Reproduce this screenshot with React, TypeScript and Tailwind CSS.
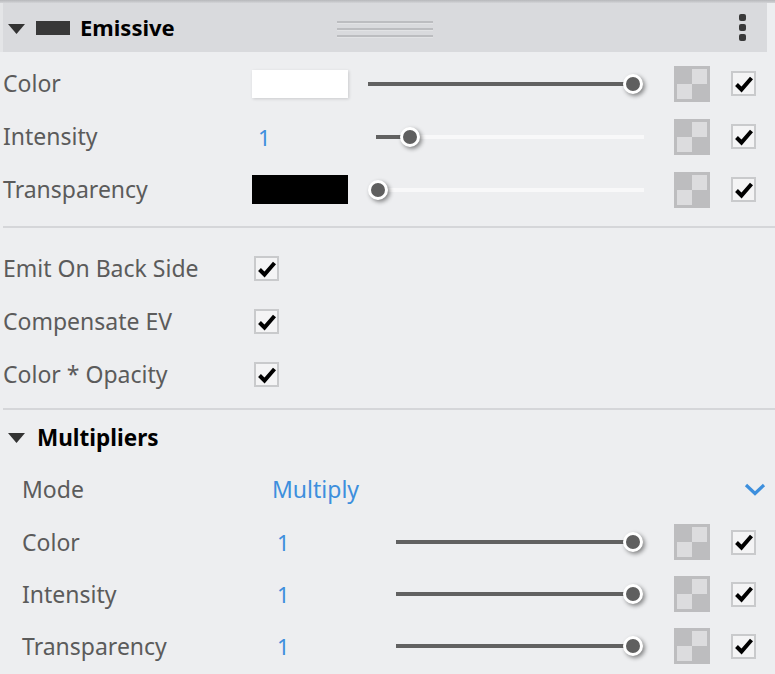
import React from "react";

const font = { fontFamily: '"Noto Sans", "Open Sans", sans-serif' };

const Check = () => (
  <div className="w-[25px] h-[25px] border-2 border-[#c9cacc] bg-[#f4f4f5] flex items-center justify-center">
    <svg width="20" height="18" viewBox="0 0 20 18">
      <path d="M2.5 9.5 L7.5 14.5 L17.5 3" fill="none" stroke="#000" strokeWidth="4" strokeLinejoin="miter" />
    </svg>
  </div>
);

const Checker = () => (
  <div className="w-[36px] h-[36px] bg-[#bdbdbf] p-[3px] grid grid-cols-2 grid-rows-2">
    <div />
    <div className="bg-[#dcdcde]" />
    <div className="bg-[#dcdcde]" />
    <div />
  </div>
);

// thumb position in px from container's left edge
const Slider = ({ width, start, thumb }: { width: number; start: number; thumb: number }) => (
  <div className="relative h-[20px]" style={{ width }}>
    <div className="absolute top-[8px] h-[4px] bg-[#f8f8f9]" style={{ left: thumb, right: 0 }} />
    {thumb > start && (
      <div className="absolute top-[8px] h-[4px] bg-[#616161]" style={{ left: start, width: thumb - start }} />
    )}
    <div
      className="absolute top-0 w-[20px] h-[20px] rounded-full bg-[#5f5f5f] border-[3px] border-white shadow-[2px_2px_4px_rgba(0,0,0,0.45)]"
      style={{ left: thumb - 10 }}
    />
  </div>
);

const Label = ({ children, w }: { children: React.ReactNode; w: string }) => (
  <div className={`${w} text-[23px] text-[#5b5b5b] leading-none`}>{children}</div>
);

const Triangle = () => (
  <svg width="17" height="10" viewBox="0 0 17 10">
    <path d="M0 0 H17 L8.5 10 Z" fill="#333" />
  </svg>
);

export default function App() {
  return (
    <div className="w-[775px] h-[674px] bg-[#edeef0] overflow-hidden" style={font}>
      <div className="h-[3px] bg-gradient-to-b from-[#b7b8bb] to-[#d3d4d7]" />
      <div className="flex">
        <div className="w-[3px] bg-[#e4e5e7]" />
        <div className="w-[764px] h-[49px] bg-[#d9dadd] flex items-center relative">
          <div className="ml-[5px] mt-[2px]"><Triangle /></div>
          <div className="ml-[11px] w-[34px] h-[14px] bg-[#383838] mt-[1px]" />
          <div className="ml-[10px] text-[22px] font-bold text-black leading-none mb-[2px]">Emissive</div>
          <div className="absolute left-[334px] top-[18px] w-[96px] flex flex-col gap-[4px]">
            <div className="h-[2px] bg-[#bcbdc0] border-b border-[#e2e3e5] box-content" />
            <div className="h-[2px] bg-[#bcbdc0] border-b border-[#e2e3e5] box-content" />
            <div className="h-[2px] bg-[#bcbdc0] border-b border-[#e2e3e5] box-content" />
          </div>
          <div className="ml-auto mr-[21px] flex flex-col gap-[3px]">
            <div className="w-[7px] h-[7px] rounded-[2px] bg-[#3a3a3a]" />
            <div className="w-[7px] h-[7px] rounded-[2px] bg-[#3a3a3a]" />
            <div className="w-[7px] h-[7px] rounded-[2px] bg-[#3a3a3a]" />
          </div>
        </div>
      </div>

      <div className="pt-[5px] pl-[3px]">
        <div className="h-[53px] flex items-center">
          <Label w="w-[249px]">Color</Label>
          <div className="w-[96px] h-[28px] bg-white shadow-[1px_1px_3px_rgba(0,0,0,0.15)]" />
          <div className="ml-[20px]"><Slider width={276} start={0} thumb={265} /></div>
          <div className="ml-[30px]"><Checker /></div>
          <div className="ml-[21px]"><Check /></div>
        </div>
        <div className="h-[53px] flex items-center">
          <Label w="w-[249px]">Intensity</Label>
          <div className="w-[96px] pl-[6px] text-[22px] text-[#3d8fdd] leading-none">1</div>
          <div className="ml-[20px]"><Slider width={276} start={8} thumb={42} /></div>
          <div className="ml-[30px]"><Checker /></div>
          <div className="ml-[21px]"><Check /></div>
        </div>
        <div className="h-[53px] flex items-center">
          <Label w="w-[249px]">Transparency</Label>
          <div className="w-[96px] h-[29px] bg-black" />
          <div className="ml-[20px]"><Slider width={276} start={10} thumb={10} /></div>
          <div className="ml-[30px]"><Checker /></div>
          <div className="ml-[21px]"><Check /></div>
        </div>
      </div>

      <div className="mt-[10px] ml-[3px] h-[2px] bg-[#d5d6d9]" />

      <div className="pt-[14px] pl-[3px]">
        {["Emit On Back Side", "Compensate EV", "Color * Opacity"].map((t) => (
          <div key={t} className="h-[53px] flex items-center">
            <Label w="w-[251px]">{t}</Label>
            <Check />
          </div>
        ))}
      </div>

      <div className="mt-[7px] ml-[3px] h-[2px] bg-[#d5d6d9]" />

      <div className="h-[53px] flex items-center pl-[8px] pt-[3px]">
        <Triangle />
        <div className="ml-[12px] text-[22.5px] font-bold text-black leading-none">Multipliers</div>
      </div>

      <div className="pl-[22px]">
        <div className="h-[53px] flex items-center">
          <Label w="w-[250px]">Mode</Label>
          <div className="text-[23px] text-[#3d8fdd] leading-none">Multiply</div>
          <div className="ml-auto mr-[9px]">
            <svg width="22" height="13" viewBox="0 0 22 13">
              <path d="M2 2 L11 10.5 L20 2" fill="none" stroke="#3d8fdd" strokeWidth="3.2" />
            </svg>
          </div>
        </div>
        {["Color", "Intensity", "Transparency"].map((t) => (
          <div key={t} className="h-[52px] flex items-center">
            <Label w="w-[250px]">{t}</Label>
            <div className="w-[124px] pl-[5px] text-[22px] text-[#3d8fdd] leading-none">1</div>
            <Slider width={248} start={0} thumb={237} />
            <div className="ml-[30px]"><Checker /></div>
            <div className="ml-[21px]"><Check /></div>
          </div>
        ))}
      </div>
    </div>
  );
}
